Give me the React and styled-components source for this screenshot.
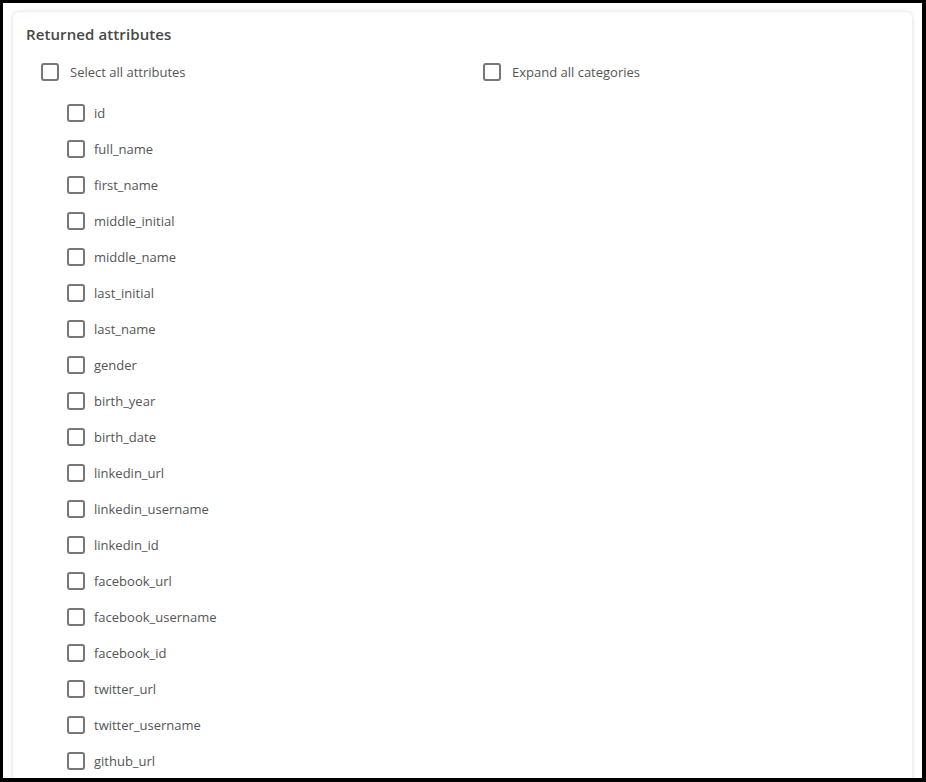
import React from "react";
import styled, { createGlobalStyle } from "styled-components";

const Global = createGlobalStyle`
  html, body { margin: 0; padding: 0; background: #000; }
  body { font-family: "Open Sans", "Noto Sans", sans-serif; }
  #root { width: 926px; height: 782px; }
`;

const Frame = styled.div`
  box-sizing: border-box;
  width: 926px;
  height: 782px;
  border: 3px solid #000;
  border-right-width: 4px;
  border-bottom-width: 4px;
  background: #fff;
  padding: 9px 10px 0 10px;
  overflow: hidden;
`;

const Card = styled.section`
  box-sizing: border-box;
  background: #fff;
  border-radius: 6px;
  box-shadow: 0 0 4px rgba(0, 0, 0, 0.16);
  padding: 12px 13px 40px 13px;
  min-height: 900px;
`;

const Title = styled.h2`
  margin: 0;
  font-size: 15px;
  font-weight: 600;
  color: #474747;
  line-height: 20px;
  letter-spacing: 0.1px;
`;

const TopRow = styled.div`
  display: grid;
  grid-template-columns: 442px 1fr;
  padding-left: 15px;
  margin-top: 19px;
`;

const Option = styled.label`
  display: flex;
  align-items: center;
  gap: ${(p) => (p.$tight ? "9px" : "11px")};
  height: 18px;
  font-size: 13px;
  color: #555;
  cursor: pointer;
`;

const Box = styled.span`
  box-sizing: border-box;
  width: 18px;
  height: 18px;
  border: 2px solid #777;
  border-radius: 3px;
  flex: none;
`;

const List = styled.div`
  display: flex;
  flex-direction: column;
  gap: 18px;
  padding-left: 41px;
  margin-top: 23px;
`;

const items = [
  "id", "full_name", "first_name", "middle_initial", "middle_name",
  "last_initial", "last_name", "gender", "birth_year", "birth_date",
  "linkedin_url", "linkedin_username", "linkedin_id", "facebook_url",
  "facebook_username", "facebook_id", "twitter_url", "twitter_username",
  "github_url",
];

export default function App() {
  return (
    <>
      <Global />
      <Frame>
        <Card>
          <Title>Returned attributes</Title>
          <TopRow>
            <Option><Box />Select all attributes</Option>
            <Option><Box />Expand all categories</Option>
          </TopRow>
          <List>
            {items.map((it) => (
              <Option key={it} $tight><Box />{it}</Option>
            ))}
          </List>
        </Card>
      </Frame>
    </>
  );
}
